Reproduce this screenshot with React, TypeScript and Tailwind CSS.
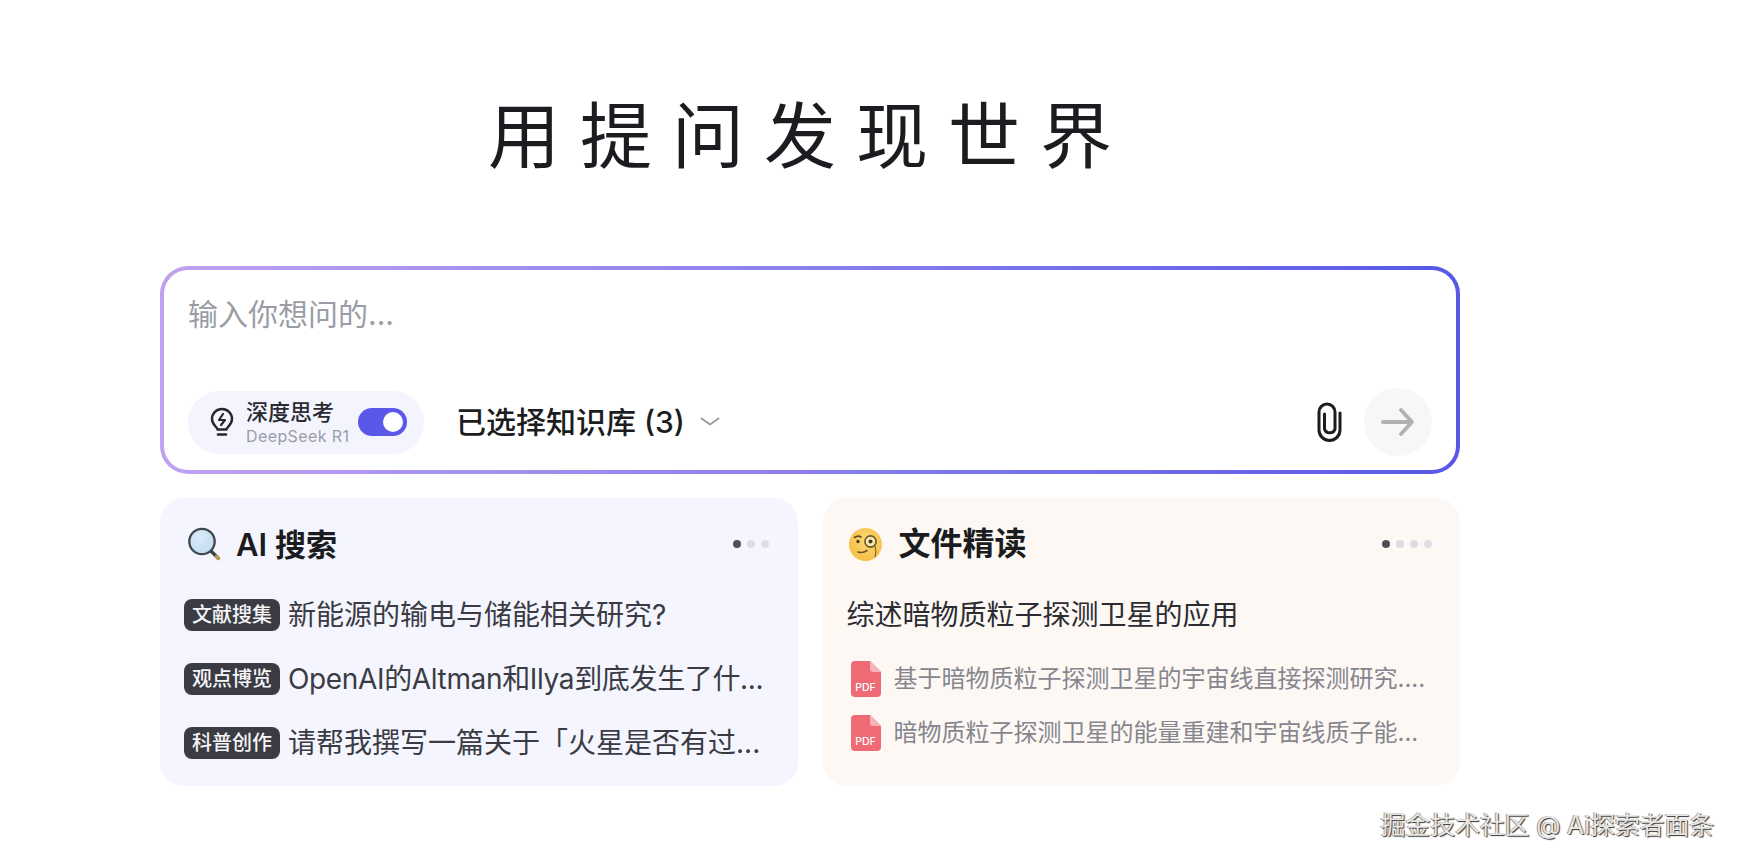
import React from "react";

const font = "font-['Inter','Noto_Sans_CJK_SC',sans-serif]";

function Bulb() {
  return (
    <svg width="24" height="30" viewBox="0 0 24 30" fill="none" stroke="#26272c" strokeWidth="2.4" strokeLinecap="round" strokeLinejoin="round" className="shrink-0">
      <path d="M7.5 22.5 C7.5 19.8 2 18.5 2 12 A10 10 0 0 1 22 12 C22 18.5 16.5 19.8 16.5 22.5 Z" />
      <path d="M8 27.5 H16" strokeWidth="2.6" />
      <path d="M13 7 L9 13 H15 L11 18" strokeWidth="2.2" />
    </svg>
  );
}

function Clip() {
  return (
    <svg width="26" height="42" viewBox="0 0 26 42" fill="none" stroke="#1c1d21" strokeWidth="3" strokeLinecap="round" strokeLinejoin="round">
      <path d="M24 12 V29 A10.5 10.5 0 0 1 3 29 V11 A8 8 0 0 1 19 11 V28 A5.5 5.5 0 0 1 8.5 28 V13" />
    </svg>
  );
}

function Arrow() {
  return (
    <svg width="34" height="30" viewBox="0 0 34 30" fill="none" stroke="#b2b2b5" strokeWidth="3.8" strokeLinecap="round" strokeLinejoin="round">
      <path d="M2 15 H31 M20 3 L31 15 L20 27" />
    </svg>
  );
}

function Magnifier() {
  return (
    <svg width="34" height="34" viewBox="0 0 34 34" fill="none">
      <defs>
        <radialGradient id="glass" cx="0.4" cy="0.35" r="0.8">
          <stop offset="0" stopColor="#dcebfa" />
          <stop offset="1" stopColor="#bcd7ee" />
        </radialGradient>
      </defs>
      <path d="M24 24 L31 31" stroke="#3c4149" strokeWidth="3.4" strokeLinecap="round" />
      <path d="M29.5 29.5 L31.5 31.5" stroke="#b99a4a" strokeWidth="3.4" strokeLinecap="round" />
      <circle cx="15" cy="14.5" r="12.7" fill="url(#glass)" stroke="#3f4650" strokeWidth="2.3" />
    </svg>
  );
}

function Monocle() {
  return (
    <svg width="33" height="33" viewBox="0 0 33 33" fill="none">
      <defs>
        <radialGradient id="face" cx="0.55" cy="0.4" r="0.7">
          <stop offset="0" stopColor="#fbdc78" />
          <stop offset="1" stopColor="#f5b93e" />
        </radialGradient>
      </defs>
      <circle cx="16.5" cy="16.5" r="16.5" fill="url(#face)" />
      <path d="M5.5 9.5 Q9 7 12 9" stroke="#5b4a2c" strokeWidth="1.6" strokeLinecap="round" />
      <circle cx="9" cy="13.5" r="1.7" fill="#4a3b24" />
      <circle cx="21.5" cy="13.5" r="5.6" fill="#fbe7a8" stroke="#6a5528" strokeWidth="1.6" />
      <circle cx="21.5" cy="13.5" r="2" fill="#4a3b24" />
      <path d="M9 24 Q14 25.5 18 22.5" stroke="#6a5528" strokeWidth="1.6" strokeLinecap="round" />
      <path d="M26 18 Q28 24 26 29" stroke="#6a5528" strokeWidth="1" />
    </svg>
  );
}

function Pdf() {
  return (
    <svg width="30" height="36" viewBox="0 0 30 36" className="shrink-0">
      <path d="M4 0 H19 L30 11 V32 A4 4 0 0 1 26 36 H4 A4 4 0 0 1 0 32 V4 A4 4 0 0 1 4 0 Z" fill="#ee6a74" />
      <path d="M19 0 L30 11 H22 A3 3 0 0 1 19 8 Z" fill="#f7b4b6" />
      <text x="14.5" y="30" textAnchor="middle" fontSize="10.5" fill="#fff" fontFamily="Inter, sans-serif" fontWeight="500">PDF</text>
    </svg>
  );
}

function Dots({ n }: { n: number }) {
  return (
    <div className="flex gap-[6px]">
      {Array.from({ length: n }).map((_, i) => (
        <span key={i} className={i === 0 ? "size-[8px] rounded-full bg-[#4e4f5a]" : "size-[8px] rounded-full bg-[#dddde3]"} />
      ))}
    </div>
  );
}

function Row({ tag, text, tight }: { tag: string; text: string; tight?: boolean }) {
  return (
    <div className="flex h-[40px] items-center gap-[8px]">
      <span className="flex h-[32px] w-[96px] shrink-0 items-center justify-center rounded-[8px] bg-[#3a3b43] text-[20px] leading-none font-medium text-[#f5f5f7]">{tag}</span>
      <span className={tight ? "text-[28px] leading-none tracking-[-0.35px] whitespace-nowrap text-[#3a3b43]" : "text-[28px] leading-none whitespace-nowrap text-[#3a3b43]"}>{text}</span>
    </div>
  );
}

function FileRow({ text }: { text: string }) {
  return (
    <div className="flex h-[40px] items-center gap-[13px] pl-[4px]">
      <Pdf />
      <span className="text-[24px] leading-none whitespace-nowrap text-[#85868e]">{text}</span>
    </div>
  );
}

export default function App() {
  return (
    <div className={`relative h-[862px] overflow-hidden bg-white ${font}`}>
      <div className="ml-[160px] w-[1300px] pt-[96px]">
        <h1 className="text-center text-[72px] leading-[80px] font-normal tracking-[20px] text-[#1b1c20]">用提问发现世界</h1>

        <div className="mt-[90px] rounded-[28px] bg-linear-to-r from-[#c0a2f0] to-[#5857e6] p-[4px]">
          <div className="flex h-[200px] flex-col justify-between rounded-[24px] bg-white pr-[24px] pb-[14px] pl-[24px] pt-[24px]">
            <div className="text-[30px] leading-[40px] text-[#9a9da4]">输入你想问的...</div>
            <div className="flex items-center">
              <div className="flex h-[63px] w-[236px] items-center rounded-full bg-[#f3f4fe] pl-[22px]">
                <Bulb />
                <div className="ml-[12px] flex w-[112px] flex-col">
                  <span className="text-[22px] leading-[28px] font-medium text-[#2a2b31]">深度思考</span>
                  <span className="text-[16px] leading-[20px] tracking-[0.4px] whitespace-nowrap text-[#9b9da6]">DeepSeek R1</span>
                </div>
                <span className="flex h-[28px] w-[49px] shrink-0 items-center justify-end rounded-full bg-[#5b57e8] pr-[4px]">
                  <span className="size-[20px] rounded-full bg-white" />
                </span>
              </div>
              <span className="ml-[32px] text-[30px] leading-none font-medium whitespace-nowrap text-[#1c1d21]">已选择知识库 (3)</span>
              <svg className="ml-[15px]" width="20" height="10" viewBox="0 0 20 10" fill="none" stroke="#9b9ca2" strokeWidth="2" strokeLinecap="round" strokeLinejoin="round">
                <path d="M1.5 1.5 L10 7.5 L18.5 1.5" />
              </svg>
              <div className="ml-auto flex items-center gap-[22px]">
                <Clip />
                <div className="flex size-[68px] items-center justify-center rounded-full bg-[#f7f7f9]">
                  <Arrow />
                </div>
              </div>
            </div>
          </div>
        </div>

        <div className="mt-[24px] grid grid-cols-2 gap-[25px]">
          <div className="h-[288px] rounded-[24px] bg-[#f4f5fe] pt-[29px] pr-[29px] pl-[24px]">
            <div className="flex h-[34px] items-center justify-between">
              <div className="flex items-center gap-[15px] pl-[3px]">
                <Magnifier />
                <span className="text-[31px] leading-none font-semibold text-[#1b1c20]">AI 搜索</span>
              </div>
              <Dots n={3} />
            </div>
            <div className="mt-[34px] flex flex-col gap-[24px]">
              <Row tag="文献搜集" text="新能源的输电与储能相关研究?" />
              <Row tag="观点博览" text="OpenAI的Altman和Ilya到底发生了什..." tight />
              <Row tag="科普创作" text="请帮我撰写一篇关于「火星是否有过..." />
            </div>
          </div>

          <div className="h-[288px] rounded-[24px] bg-[#fdf8f4] pt-[29px] pr-[28px] pl-[24px]">
            <div className="flex h-[34px] items-center justify-between">
              <div className="flex items-center gap-[17px] pl-[2px]">
                <Monocle />
                <span className="text-[32px] leading-none font-semibold text-[#1b1c20]">文件精读</span>
              </div>
              <Dots n={4} />
            </div>
            <div className="mt-[34px] flex h-[40px] items-center text-[28px] leading-none whitespace-nowrap text-[#2c2d33]">综述暗物质粒子探测卫星的应用</div>
            <div className="mt-[24px] flex flex-col gap-[14px]">
              <FileRow text="基于暗物质粒子探测卫星的宇宙线直接探测研究...." />
              <FileRow text="暗物质粒子探测卫星的能量重建和宇宙线质子能..." />
            </div>
          </div>
        </div>
      </div>

      <div className="absolute top-[810px] right-[24px] text-[25px] leading-[30px] tracking-[-0.2px] whitespace-nowrap text-[#e6e6e6] [text-shadow:1px_1px_1px_#333,-1px_-0.5px_0.5px_#999]">掘金技术社区 @ Ai探索者面条</div>
    </div>
  );
}
